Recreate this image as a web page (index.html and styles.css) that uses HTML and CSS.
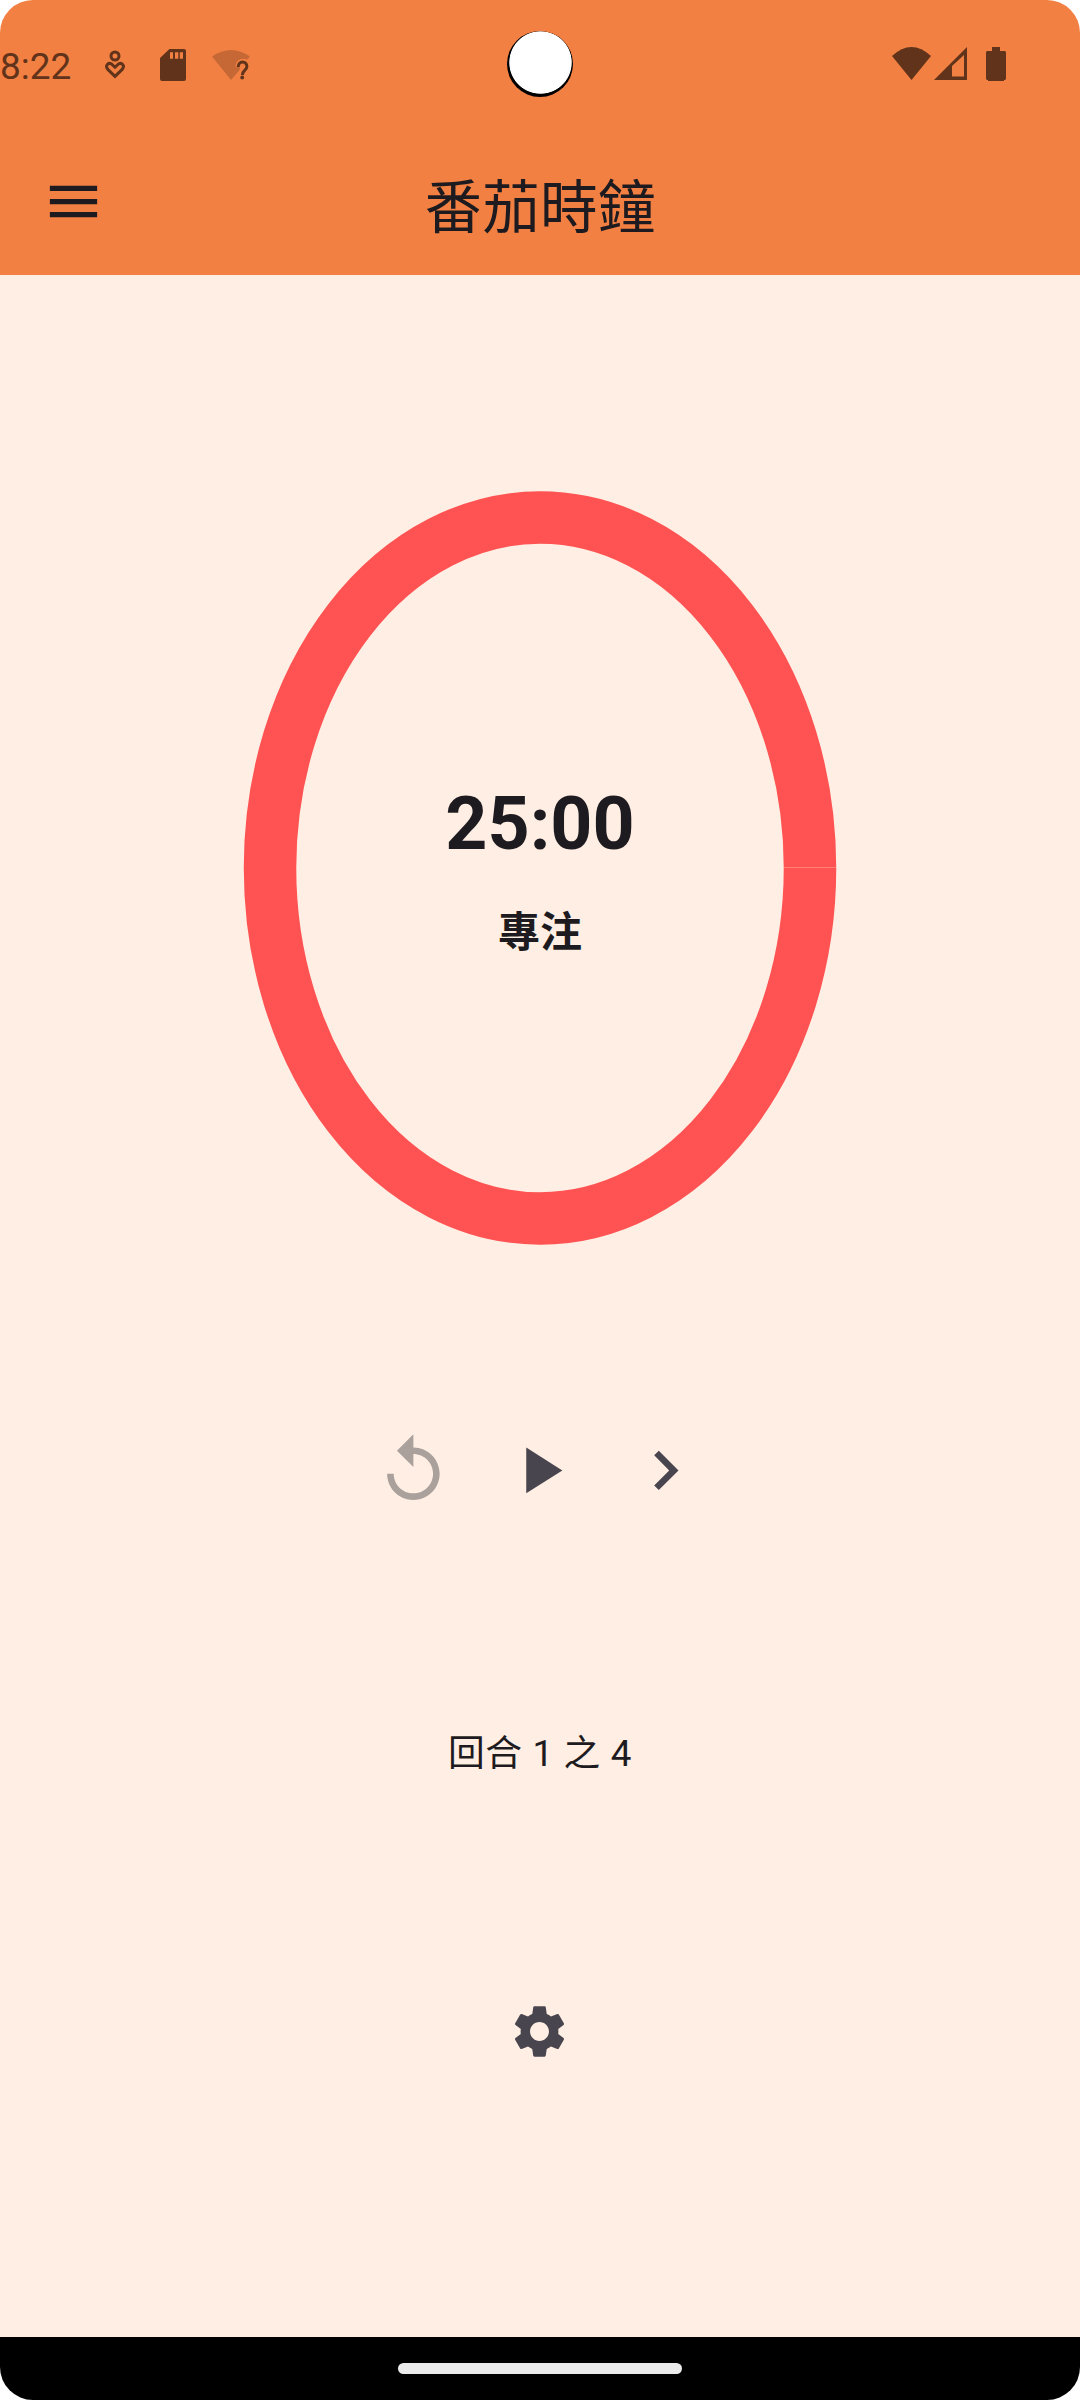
FILE: index.html
```html
<!DOCTYPE html>
<html lang="zh-Hant">
<head>
<meta charset="utf-8">
<title>番茄時鐘</title>
<link rel="stylesheet" href="styles.css">
</head>
<body>
<div class="screen">
  <header class="header">
    <div class="status">
      <div class="status-left">
        <span class="clock">8:22</span>
        <svg class="health" viewBox="104 49 22 32" fill="none" stroke="currentColor" stroke-width="3"><circle cx="115" cy="56" r="4"/><path d="M115 76.3 107.8 69.4C104.8 66 108 62 111.5 64L115 67.3 118.500 64C122 62 125.200 66 122.200 69.400Z"/></svg>
        <svg class="card" viewBox="160 49 26 32" fill="currentColor" fill-rule="evenodd"><path d="M169.500 49H184q2 0 2 2V79q0 2-2 2H162q-2 0-2-2V58ZM170 52.300V58.700h3V52.300Zm5 0V58.700h3.300V52.300Zm4.800 0V58.700h3.200V52.300Z"/></svg>
        <svg class="wifi-unknown" viewBox="212 49 38 32" fill="currentColor"><path class="faded" d="M212 56.500Q231 43.500 250 56.500L247 59.500C241 57 235.500 61 235.500 67H239.500L240 69.500 231 80Z"/><path d="M238.200 67C238.200 60.200 246.900 60.600 246.900 66.400 246.900 70.200 242.400 70 242.400 75" fill="none" stroke="currentColor" stroke-width="3"/><circle cx="242.200" cy="77.500" r="1.900"/></svg>
      </div>
      <div class="status-right">
        <svg class="wifi" viewBox="892 47 39 33" fill="currentColor"><path d="M892 56Q911.500 38 931 56L911.500 80Z"/></svg>
        <svg class="signal" viewBox="934 47 33 33" fill="currentColor" fill-rule="evenodd"><path d="M934 80 967 47V80ZM952 66V76.500H964V55Z"/></svg>
        <svg class="battery" viewBox="986 47 20 34" fill="currentColor"><path d="M992 47h8v4h5l1 1v27l-1 1h-1v1h-16v-1h-1l-1-1V52l1-1h5Z"/></svg>
      </div>
      <div class="camera"></div>
    </div>
    <div class="appbar">
      <svg class="menu" viewBox="0 0 24 24" fill="currentColor"><path d="M3 18h18v-2H3v2zm0-5h18v-2H3v2zm0-7v2h18V6H3z"/></svg>
      <h1 class="title">番茄時鐘</h1>
    </div>
  </header>
  <main class="main">
    <section class="timer">
      <svg class="ring" viewBox="0 0 594 754"><ellipse cx="297" cy="377" rx="270" ry="350.500" fill="none" stroke="#ff5252" stroke-width="52.500"/><path d="M541 376.500h52" stroke="#ff8176"/></svg>
      <div class="readout">
        <div class="time">25:00</div>
        <div class="phase">專注</div>
      </div>
    </section>
    <nav class="controls">
      <svg class="icon disabled" viewBox="0 0 24 24" fill="currentColor"><path d="M12 5V1L7 6l5 5V7c3.310 0 6 2.690 6 6s-2.690 6-6 6-6-2.690-6-6H4c0 4.420 3.580 8 8 8s8-3.580 8-8-3.580-8-8-8z"/></svg>
      <svg class="icon" viewBox="0 0 24 24" fill="currentColor"><path d="M8 5v14l11-7z"/></svg>
      <svg class="icon" viewBox="0 0 24 24" fill="currentColor"><path d="M10 6 8.590 7.410 13.170 12l-4.580 4.590L10 18l6-6z"/></svg>
    </nav>
    <p class="round">回合 1 之 4</p>
    <svg class="settings" viewBox="0 0 24 24" fill="currentColor"><path d="M19.140,12.940c0.040-0.300,0.060-0.610,0.060-0.940c0-0.320-0.020-0.640-0.070-0.940l2.030-1.580c0.180-0.140,0.230-0.410,0.120-0.610l-1.920-3.320c-0.120-0.220-0.370-0.290-0.590-0.220l-2.390,0.960c-0.500-0.380-1.030-0.700-1.620-0.940L14.400,2.810c-0.040-0.240-0.240-0.410-0.480-0.410h-3.840c-0.240,0-0.430,0.170-0.470,0.410L9.250,5.350C8.660,5.590,8.120,5.920,7.630,6.290L5.240,5.330c-0.220-0.080-0.470,0-0.590,0.220L2.740,8.870C2.620,9.080,2.660,9.340,2.860,9.480l2.030,1.580C4.840,11.360,4.800,11.690,4.800,12s0.020,0.640,0.070,0.940l-2.030,1.580c-0.180,0.140-0.230,0.410-0.120,0.610l1.920,3.320c0.120,0.220,0.370,0.290,0.590,0.220l2.390-0.960c0.500,0.380,1.030,0.700,1.620,0.940l0.360,2.540c0.050,0.240,0.240,0.410,0.480,0.410h3.840c0.240,0,0.440-0.170,0.470-0.410l0.360-2.540c0.590-0.240,1.130-0.560,1.620-0.940l2.390,0.960c0.220,0.080,0.470,0,0.590-0.220l1.920-3.320c0.120-0.220,0.070-0.470-0.120-0.610L19.140,12.940zM12,15.600c-1.980,0-3.600-1.620-3.600-3.600s1.620-3.600,3.600-3.600s3.600,1.620,3.600,3.600S13.980,15.600,12,15.600z"/></svg>
  </main>
  <footer class="navbar"><div class="handle"></div></footer>
</div>
</body>
</html>
```
FILE: styles.css
```css
* { box-sizing: border-box; margin: 0; padding: 0; }
body { background: #fff; font-family: Roboto, "Noto Sans CJK TC", sans-serif; color: #1d1b20; }
svg { display: block; flex: none; }

.screen {
  width: 1080px;
  height: 2400px;
  display: flex;
  flex-direction: column;
  overflow: hidden;
  border-radius: 33px;
  background: #ffeee3;
}

.header { height: 275px; background: #f28042; }
.status {
  position: relative;
  height: 128px;
  display: flex;
  justify-content: space-between;
  color: #61331a;
}
.status-left { display: flex; padding-top: 49px; }
.clock {
  width: 104px;
  height: 32px;
  font-size: 37px;
  line-height: 35px;
}
.health { width: 22px; height: 32px; }
.card { width: 26px; height: 32px; margin-left: 34px; }
.wifi-unknown { width: 38px; height: 32px; margin-left: 26px; }
.faded { opacity: 0.3; }
.status-right { display: flex; padding: 47px 74px 0 0; }
.wifi { width: 39px; height: 33px; }
.signal { width: 33px; height: 33px; margin-left: 3px; }
.battery { width: 20px; height: 34px; margin-left: 19px; }
.camera {
  position: absolute;
  left: 507px;
  top: 31px;
  width: 66px;
  height: 66px;
  border-radius: 50%;
  background: radial-gradient(circle at 33.500px 31.500px, #fff 30.800px, #000 31.600px);
}

.appbar {
  height: 147px;
  display: grid;
  grid-template-columns: 63px 1fr 63px;
  align-items: center;
  padding: 0 42px;
}
.menu { width: 63px; height: 63px; }
.title { font-size: 57.750px; font-weight: 400; line-height: 76px; text-align: center; padding-top: 12px; }

.main { flex: 1; display: flex; flex-direction: column; align-items: center; }
.timer { display: grid; place-items: center; margin-top: 215.500px; }
.ring { grid-area: 1 / 1; width: 594px; height: 754px; }
.readout { grid-area: 1 / 1; padding-top: 8px; text-align: center; font-weight: 700; }
.time { font-size: 73.500px; line-height: 86px; }
.phase { font-size: 42px; line-height: 60px; margin-top: 36px; }

.controls { display: flex; gap: 47.250px; margin: 186.250px 1px 0 0; color: #49454f; }
.icon { width: 78.750px; height: 78.750px; }
.disabled { color: #aaa09c; }

.round { margin-top: 217.500px; font-size: 36.750px; line-height: 53px; letter-spacing: 0.650px; }
.settings { width: 63px; height: 63px; margin: 219.500px 1px 0 0; color: #49454f; }

.navbar { height: 63px; background: #000; display: flex; justify-content: center; padding-top: 26px; }
.handle { width: 284px; height: 11px; border-radius: 6px; background: #ebebeb; }
```
